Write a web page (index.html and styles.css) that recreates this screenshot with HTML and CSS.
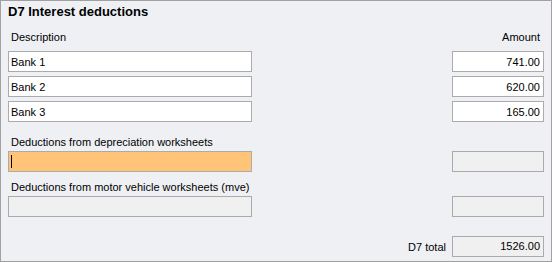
FILE: index.html
```html
<!DOCTYPE html>
<html lang="en">
<head>
  <meta charset="UTF-8">
  <title>D7 Interest deductions</title>
  <link rel="stylesheet" href="styles.css">
</head>
<body>
  <!-- Worksheet panel -->
  <section class="panel">
    <h1 class="title">D7 Interest deductions</h1>

    <div class="row head">
      <span class="desc-label">Description</span>
      <span class="amt-label">Amount</span>
    </div>

    <div class="lines">
      <div class="row">
        <input class="field desc" type="text" value="Bank 1">
        <input class="field amt" type="text" value="741.00">
      </div>
      <div class="row">
        <input class="field desc" type="text" value="Bank 2">
        <input class="field amt" type="text" value="620.00">
      </div>
      <div class="row">
        <input class="field desc" type="text" value="Bank 3">
        <input class="field amt" type="text" value="165.00">
      </div>
    </div>

    <div class="group first">
      <label class="group-label">Deductions from depreciation worksheets</label>
      <div class="row">
        <div class="field desc active"><span class="caret"></span></div>
        <div class="field amt off"></div>
      </div>
    </div>

    <div class="group">
      <label class="group-label">Deductions from motor vehicle worksheets (mve)</label>
      <div class="row">
        <div class="field desc off"></div>
        <div class="field amt off"></div>
      </div>
    </div>

    <div class="total">
      <span class="total-label">D7 total</span>
      <div class="field amt off">1526.00</div>
    </div>
  </section>
</body>
</html>
```

FILE: styles.css
```css
/* Layout for the worksheet panel */
body {
  margin: 0;
  font-family: "Liberation Sans", Arial, sans-serif;
  color: #000;
}

.panel {
  box-sizing: border-box;
  width: 552px;
  height: 262px;
  padding: 0 7px;
  border: 1px solid #a0a0a0;
  background-color: #eff0f4;
}

.title {
  margin: 3px 0 0;
  font-size: 13px;
  line-height: 16px;
  font-weight: bold;
}

.row {
  display: flex;
  justify-content: space-between;
  align-items: center;
}

.head {
  margin-top: 11px;
  font-size: 11px;
  line-height: 13px;
}

.desc-label {
  padding-left: 3px;
}

.amt-label {
  padding-right: 4px;
}

.lines {
  display: flex;
  flex-direction: column;
  gap: 4px;
  margin-top: 7px;
}

/* Text boxes */
.field {
  box-sizing: border-box;
  height: 21px;
  margin: 0;
  padding: 0 3px 0 2px;
  border: 1px solid #ababab;
  background-color: #fff;
  font-family: "Liberation Sans", Arial, sans-serif;
  font-size: 11px;
  line-height: 19px;
  color: #000;
  outline: none;
}

.desc {
  width: 244px;
}

.amt {
  width: 92px;
  text-align: right;
}

.off {
  background-color: #f0f0f0;
}

.active {
  background-color: #ffc477;
  position: relative;
}

.caret {
  position: absolute;
  left: 2px;
  top: 3px;
  width: 1px;
  height: 13px;
  background-color: #000;
}

.group {
  margin-top: 9px;
}

.group.first {
  margin-top: 14px;
}

.group-label {
  display: block;
  margin-bottom: 2px;
  padding-left: 3px;
  font-size: 11px;
  line-height: 13px;
}

.total {
  display: flex;
  justify-content: flex-end;
  align-items: center;
  gap: 6px;
  margin-top: 19px;
}

.total-label {
  font-size: 11px;
}
```
